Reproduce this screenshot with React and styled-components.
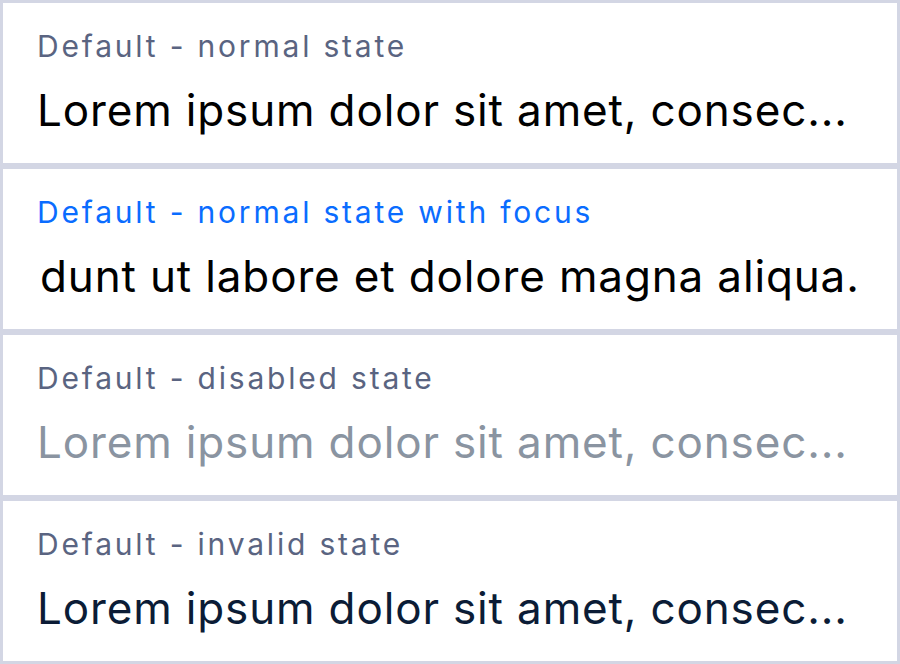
import styled, { createGlobalStyle } from "styled-components";

const GlobalStyle = createGlobalStyle`
  html, body {
    margin: 0;
    padding: 0;
    background: #ffffff;
  }
  body {
    font-family: Inter, "Noto Sans", "Liberation Sans", sans-serif;
  }
`;

const List = styled.div`
  display: flex;
  flex-direction: column;
  width: 900px;
`;

const Field = styled.div`
  box-sizing: border-box;
  height: 166px;
  border: 3px solid #d3d6e4;
  background: #ffffff;
  padding: 26px 0 0 34px;
  display: flex;
  flex-direction: column;
  gap: 20px;
  overflow: hidden;
`;

const Label = styled.label`
  font-size: 30px;
  line-height: 34px;
  letter-spacing: 2.8px;
  color: ${(p) => (p.$focused ? "#0a6cff" : "#5a6481")};
  white-space: nowrap;
`;

const valueColor = {
  normal: "#000000",
  focused: "#000000",
  disabled: "#8a94a1",
  invalid: "#0b1c36",
};

const Value = styled.div`
  font-size: 44px;
  line-height: 54px;
  letter-spacing: 0.85px;
  color: ${(p) => valueColor[p.$state]};
  white-space: nowrap;
  padding-left: ${(p) => (p.$state === "focused" ? "3px" : "0")};
`;

const fields = [
  { label: "Default - normal state", value: "Lorem ipsum dolor sit amet, consec...", state: "normal" },
  { label: "Default - normal state with focus", value: "dunt ut labore et dolore magna aliqua.", state: "focused" },
  { label: "Default - disabled state", value: "Lorem ipsum dolor sit amet, consec...", state: "disabled" },
  { label: "Default - invalid state", value: "Lorem ipsum dolor sit amet, consec...", state: "invalid" },
];

export default function App() {
  return (
    <>
      <GlobalStyle />
      <List>
        {fields.map((f) => (
          <Field key={f.label}>
            <Label $focused={f.state === "focused"}>{f.label}</Label>
            <Value $state={f.state}>{f.value}</Value>
          </Field>
        ))}
      </List>
    </>
  );
}
